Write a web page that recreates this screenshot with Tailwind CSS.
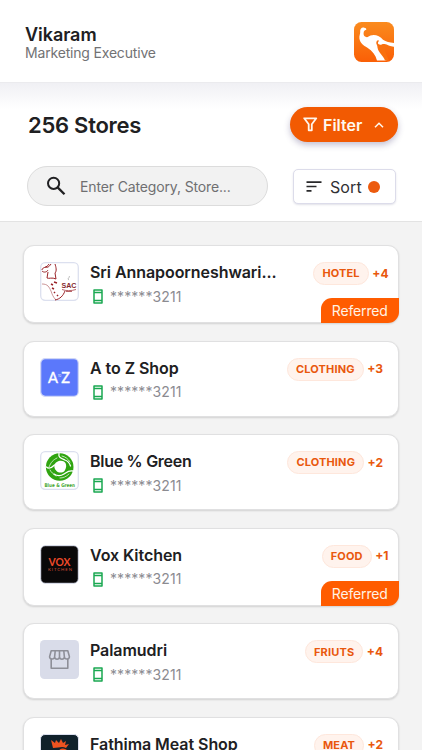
<!DOCTYPE html>
<html lang="en">
<head>
<meta charset="utf-8">
<title>Stores</title>
<script src="https://cdn.jsdelivr.net/npm/@tailwindcss/browser@4"></script>
</head>
<body class="w-[422px] h-[750px] overflow-hidden bg-[#f3f3f3] font-['Inter','Liberation_Sans',sans-serif] text-[#202022]">
<header class="h-[83px] bg-white border-b border-[#ebebee] pl-[25px] pr-7 flex justify-between">
  <div class="pt-[24px]">
    <h1 class="text-[18px] leading-[21px] font-semibold tracking-[-0.05px]">Vikaram</h1>
    <p class="text-[14px] leading-[16px] text-[#727274] tracking-[-0.18px]">Marketing Executive</p>
  </div>
  <svg class="mt-[22px] w-10 h-10" viewBox="0 0 40 40">
    <defs><linearGradient id="lg" x1="0" y1="0" x2="0" y2="1"><stop offset="0" stop-color="#fa8b1e"/><stop offset="1" stop-color="#fa5f06"/></linearGradient></defs>
    <rect width="40" height="40" rx="7.500" fill="url(#lg)"/>
    <path d="M10.800 6C8.300 4.600 5.800 6.600 6.200 9.600c.3 2.200-1.200 4-.8 6.900.6 4.500 4 6.800 8 9.300 5 3.200 8.100 7.200 9.600 12.700h9.500c-2-5.500-5.800-8.500-6.500-13 .8-1.500 1.500-2 3-2.300 4 0 6.500 2 11 1.800V21c-4.500-.3-8-1.200-11-3.200-3-3.800-8.500-6-12.500-4.200-2 .9-3 2.200-5 1.200s-2.200-3.100-1.700-5.100c.3-1.400 2-1.400 2.500-2.200.2-.6-.3-1.200-1-1.500z" fill="#fff"/>
    <path d="M24 18.300c-1.600.3-2.300 2.600-1.200 4.400.6 1 .6 2 .8 3.300.8 4.500 5.900 8 7.400 12.500h4c-1.800-5-4.500-8.500-3.500-12.500 2.500-1 4.500.5 8.500.3v-1.600c-4 .2-6.500-2.300-9.500-2.700-2.500-.3-3.500 1.200-5.300.6-1.500-.5-1.700-2-.5-3.300.2-.6-.1-1-.7-1z" fill="#f9700e"/>
  </svg>
</header>

<section class="h-[139px] bg-white bg-linear-to-b from-[#f0f0f4] to-white to-[26px] border-b border-[#e3e3e3] pl-[27px] pr-[26px] pt-[24px]">
  <div class="flex justify-between h-[35px]">
    <h2 class="pl-px pt-[4px] text-[22px] leading-[28px] font-semibold tracking-[-0.26px]">256 Stores</h2>
    <button class="w-[108px] h-[35px] -mr-0.5 rounded-full bg-[#f25a02] text-white flex items-center pl-[13px] shadow-[0_3px_6px_rgba(60,50,110,0.3)]">
      <svg class="w-[15px] h-[15px]" viewBox="0 0 15 15"><path d="M1.200 1.300h12.100L8.800 7.300v6H5.700v-6z" fill="none" stroke="#fff5ec" stroke-width="1.800" stroke-linejoin="round"/></svg>
      <span class="ml-[5px] text-[16px] font-semibold text-[#fff8ef]">Filter</span>
      <svg class="ml-[12px] w-[10px] h-[6px]" viewBox="0 0 10 6"><path d="M1 5.200 5 1.200l4 4" fill="none" stroke="#fff8ef" stroke-width="1.500"/></svg>
    </button>
  </div>
  <div class="flex justify-between mt-[24px]">
    <div class="w-[241px] h-[40px] rounded-full bg-[#f2f2f2] border border-[#dcdcdc] flex items-center pl-[18px]">
      <svg class="w-[21px] h-[20px]" viewBox="0 0 21 20"><circle cx="7.600" cy="7.300" r="5.600" fill="none" stroke="#202022" stroke-width="2"/><path d="m11.600 11.400 6.900 6.900" stroke="#202022" stroke-width="2.300"/></svg>
      <span class="ml-[13px] text-[14px] text-[#6f6f71] tracking-[-0.14px]">Enter Category, Store...</span>
    </div>
    <button class="w-[103px] h-[35px] mt-[3px] rounded-[5px] bg-white border border-[#dcdcea] flex items-center pl-[12px] shadow-[0_1px_2px_rgba(60,60,110,0.15)]">
      <svg class="w-4 h-[11px] shrink-0" viewBox="0 0 16 11"><path d="M.5 1.200h15M.5 5.500h10M.5 9.800h5" stroke="#28282a" stroke-width="1.700"/></svg>
      <span class="ml-[8px] text-[16px] text-[#303033] tracking-[0.1px]">Sort</span>
      <i class="ml-[6.500px] size-[12px] shrink-0 rounded-full bg-[#ec5b0e]"></i>
    </button>
  </div>
</section>

<main id="list" class="h-[528px] overflow-hidden pt-[23px] px-[23px] flex flex-col gap-[17.600px]"></main>

<script>
const logos = {
  sac: `<rect x=".7" y=".7" width="37.600" height="37.600" rx="4.500" fill="#fff" stroke="#dce0ef" stroke-width="1.300"/>
    <g fill="none" stroke="#9a2228" stroke-width="1"><path d="M2 8c0-3 5-2 7-6M2 9c2 2 5 1 6-1M8 10l-1 6c2 1 5-1 9 1l-1-6c2-2 1-6 0-9M5 5c2 1 4 0 6-3"/><path d="M2 22c6 0 7 3 9 7 1 3 2 6 5 9" stroke-width=".7" stroke="#b5686c"/><path d="M11 22l2 1M14 20l3 1M12 26l2 1M14 30l1 1M17 33l1 1" stroke-width="1.500"/><path d="M15 38c5-1 8-4 10-9"/><path d="M22 27.500c4 1.500 9 1.500 14 0M26 29.500h6" stroke-width=".7"/><path d="M29 18c-3-2 2-2 0-4" stroke="#999" stroke-width=".7"/></g>
    <text x="21.500" y="26.300" font-family="Liberation Sans, Arial, sans-serif" font-weight="700" font-size="7" textLength="15" lengthAdjust="spacingAndGlyphs" fill="#85292c">SAC</text>`,
  az: `<rect x=".7" y=".7" width="37.600" height="37.600" rx="4.500" fill="#5b78fb" stroke="#cfd6f7" stroke-width="1.200"/>
    <g font-family="Lato, sans-serif" fill="#fff" stroke="#fff" stroke-width=".4"><text x="8" y="25" font-size="16" textLength="10" lengthAdjust="spacingAndGlyphs">A</text><text x="18" y="19.300" font-size="3.500" stroke="none" textLength="3.200" lengthAdjust="spacingAndGlyphs">TO</text><text x="21.200" y="25" font-size="16" textLength="8.700" lengthAdjust="spacingAndGlyphs">Z</text></g>`,
  green: `<rect x=".7" y=".7" width="37.600" height="37.600" rx="4.500" fill="#fff" stroke="#dce0ef" stroke-width="1.300"/>
    <circle cx="19.700" cy="16" r="13.800" fill="#2fa410"/>
    <path d="M14.500 14c1-4 8-6 11-2 1 2 1 5-1 8-2 2-6 2-8 0-2-2-2.500-4-2-6z" fill="#fff"/>
    <g fill="none" stroke="#fff" stroke-width="1.300" stroke-linecap="round"><path d="M19 2.500c-1 4 2 5 6 6.500 3 1 4.500 3 5.500 6M6.500 16c3 3 6 0 8-2M33 20c-4-1-6 1-9 3-3 2-7 2-10 0"/><path d="M9 16c2-5 4-7 8-9M22 5c4 1 6 3 8 6M29 23c-3 3-6 4-9 4M10 19c1 2 3 4 6 6" stroke-width=".7"/></g>
    <text x="4.500" y="35.800" font-family="DejaVu Sans, sans-serif" font-weight="700" font-size="5" textLength="30.500" lengthAdjust="spacingAndGlyphs" fill="#46a733">Blue &amp; Green</text>`,
  vox: `<rect x=".7" y=".7" width="37.600" height="37.600" rx="4.500" fill="#090809" stroke="#dce0ef" stroke-width="1"/>
    <g font-family="Lato, sans-serif" fill="#ed4a29"><text x="8.500" y="20.500" font-weight="700" font-size="11" textLength="22" lengthAdjust="spacingAndGlyphs">VOX</text><text x="8" y="26" font-size="4.300" textLength="24" fill="#d04c36">KITCHEN</text></g>`,
  shop: `<rect width="39" height="39" rx="4.500" fill="#d9dce9"/>
    <path fill="none" stroke="#8e8f98" stroke-width="1.600" stroke-linejoin="round" d="M11.200 10.800h16.600l1.600 5.800c.3 3-4.600 3.300-5 .4-.4 2.900-4.500 2.900-4.900 0-.4 2.900-4.500 2.900-4.900 0-.4 2.900-5.300 2.600-5-.4zM14.600 17l.6-6M19.500 17v-6M24.400 17l-.6-6M11.200 19v9.300h16.600V19"/>`,
  meat: `<rect x=".5" y=".5" width="38" height="38" rx="4.500" fill="#10212b" stroke="#dce0ef"/>
    <path d="M13 14l-2-8 4 3 1-3 3 3 2-4 2 4 3-2-1 4 4-1-3 4c-4-2-7 0-13 0z" fill="#ee5320"/><path d="M19 18c1-3 5-4 8-1" fill="none" stroke="#ee5320" stroke-width="1.500"/>`
};
const stores = [
  ['sac', 'Sri Annapoorneshwari...', 'HOTEL', 4, true],
  ['az', 'A to Z Shop', 'CLOTHING', 3, false],
  ['green', 'Blue % Green', 'CLOTHING', 2, false],
  ['vox', 'Vox Kitchen', 'FOOD', 1, true],
  ['shop', 'Palamudri', 'FRIUTS', 4, false],
  ['meat', 'Fathima Meat Shop', 'MEAT', 2, false]
];
document.getElementById('list').innerHTML = stores.map(([logo, name, tag, more, referred]) => `
  <article class="relative ${referred ? 'h-[78px] pr-[9.500px]' : 'h-[76px] pr-[15px]'} shrink-0 rounded-[11px] bg-white border border-[#e0e0e1] shadow-[0_1px_2px_rgba(0,0,0,0.14)] flex pt-[16px] pl-[15.500px]">
    <svg class="w-[39px] h-[39px]" viewBox="0 0 39 39">${logos[logo]}</svg>
    <div class="ml-[11.500px]">
      <h3 class="text-[16px] leading-[20px] font-semibold ${logo === 'green' ? 'tracking-[-0.28px]' : 'tracking-[-0.06px]'} whitespace-nowrap">${name}</h3>
      <div class="flex items-center mt-[5.500px] pl-[3px]"><svg class="w-[10px] h-[15px]" viewBox="0 0 10 15"><path d="M1 1h8v13H1zM1 3.400h8M1 11.600h8" fill="none" stroke="#1aa851" stroke-width="1.500" stroke-linejoin="round"/></svg><span class="ml-[7px] text-[14px] leading-[18px] tracking-[0.08px] text-[#8b8b91]">******3211</span></div>
    </div>
    <div class="ml-auto flex h-[23px] items-center gap-[3.500px] text-[#e9580d]"><span class="h-[23px] px-[8px] rounded-full border border-[#fee7dc] bg-[#fff3ed] flex items-center text-[11px] font-bold tracking-[0.15px]">${tag}</span><b class="text-[12px] font-bold">+${more}</b></div>
    ${referred ? '<span class="absolute -right-px -bottom-px w-[78.500px] h-[25px] rounded-tl-[11px] rounded-br-[11px] bg-[#ff5c00] text-[#fff3e5] text-[14px] leading-[25px] tracking-[-0.15px] text-center">Referred</span>' : ''}
  </article>`).join('');
</script>
</body>
</html>
